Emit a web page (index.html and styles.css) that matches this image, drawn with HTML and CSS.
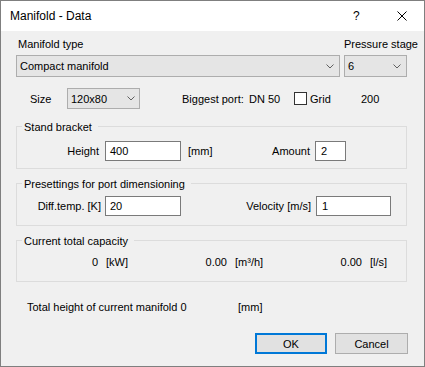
FILE: index.html
```html
<!DOCTYPE html>
<html>
<head>
<meta charset="utf-8">
<link rel="stylesheet" href="styles.css">
</head>
<body>
<div class="window">
  <div class="titlebar">
    <span class="title">Manifold - Data</span>
    <span class="help">?</span>
    <svg class="close" width="10" height="10" viewBox="0 0 10 10"><path d="M0.5 0.5 L9.5 9.5 M9.5 0.5 L0.5 9.5" stroke="#000" stroke-width="1"/></svg>
  </div>
  <div class="content">
    <div class="row labels">
      <span class="lbl-type">Manifold type</span>
      <span class="lbl-stage">Pressure stage</span>
    </div>
    <div class="row combos">
      <div class="combo c-type"><span>Compact manifold</span><svg class="chev" width="8" height="5" viewBox="0 0 8 5"><path d="M0.5 0.5 L4 4 L7.5 0.5" fill="none" stroke="#606060"/></svg></div>
      <div class="combo c-stage"><span>6</span><svg class="chev" width="8" height="5" viewBox="0 0 8 5"><path d="M0.5 0.5 L4 4 L7.5 0.5" fill="none" stroke="#606060"/></svg></div>
    </div>
    <div class="row size-row">
      <span class="lbl-size">Size</span>
      <div class="combo c-size"><span>120x80</span><svg class="chev" width="8" height="5" viewBox="0 0 8 5"><path d="M0.5 0.5 L4 4 L7.5 0.5" fill="none" stroke="#606060"/></svg></div>
      <span class="lbl-port">Biggest port:</span>
      <span class="val-port">DN 50</span>
      <span class="checkbox"></span>
      <span class="lbl-grid">Grid</span>
      <span class="val-grid">200</span>
    </div>

    <div class="group g1">
      <div class="legend">Stand bracket</div>
      <div class="grow">
        <span class="cell-a">Height</span>
        <div class="input w-a">400</div>
        <span class="cell-b1"><span>[mm]</span><span>Amount</span></span>
        <div class="input w-amount">2</div>
      </div>
    </div>

    <div class="group g2">
      <div class="legend">Presettings for port dimensioning</div>
      <div class="grow">
        <span class="cell-a2">Diff.temp. [K]</span>
        <div class="input w-a">20</div>
        <span class="cell-b2">Velocity [m/s]</span>
        <div class="input w-vel">1</div>
      </div>
    </div>

    <div class="group g3">
      <div class="legend">Current total capacity</div>
      <div class="grow">
        <span class="v v1">0</span><span class="u u1">[kW]</span>
        <span class="v v2">0.00</span><span class="u u2">[m³/h]</span>
        <span class="v v3">0.00</span><span class="u u3">[l/s]</span>
      </div>
    </div>

    <div class="row total-row">
      <span class="lbl-total">Total height of current manifold 0</span>
      <span>[mm]</span>
    </div>

    <div class="row buttons">
      <div class="btn btn-ok">OK</div>
      <div class="btn btn-cancel">Cancel</div>
    </div>
  </div>
</div>
</body>
</html>
```

FILE: styles.css
```css
* { box-sizing: border-box; }
html, body { margin: 0; padding: 0; background: #f0f0f0; }
body {
  font-family: "Liberation Sans", Arial, sans-serif;
  font-size: 11px;
  color: #000;
}
.window {
  width: 425px;
  height: 367px;
  border: 1px solid #7f7f7f;
  background: #f0f0f0;
  display: flex;
  flex-direction: column;
  overflow: hidden;
}
.titlebar {
  height: 30px;
  background: #fff;
  display: flex;
  align-items: center;
  flex-shrink: 0;
}
.title {
  font-size: 12px;
  margin-left: 9px;
  flex: 1;
}
.help {
  font-size: 12px;
  width: 44px;
}
.close {
  margin-right: 17px;
}
.content {
  padding: 0 16px 0 15px;
  display: flex;
  flex-direction: column;
}
.row {
  display: flex;
  align-items: center;
  flex-shrink: 0;
}
.row > * { flex-shrink: 0; }
.labels {
  height: 16px;
  margin-top: 5px;
}
.lbl-type { width: 328px; padding-left: 2px; }
.lbl-stage { white-space: nowrap; }

.combos {
  height: 22px;
  margin-top: 3px;
  gap: 4px;
}
.combo {
  height: 100%;
  background: #e5e5e5;
  border: 1px solid #adadad;
  display: flex;
  align-items: center;
  justify-content: space-between;
  padding: 0 5px 0 3px;
}
.c-type { width: 324px; }
.c-stage { width: 63px; }
.chev { flex-shrink: 0; }

.size-row {
  height: 21px;
  margin-top: 11px;
}
.lbl-size { width: 37px; margin-left: 14px; }
.c-size { width: 73px; padding-right: 4px; }
.lbl-port { width: 67px; margin-left: 42px; }
.val-port { width: 45px; }
.checkbox {
  width: 13px;
  height: 13px;
  border: 1px solid #333;
  background: #fff;
  margin-right: 3px;
}
.lbl-grid { width: 51px; }

.group {
  border: 1px solid #dcdcdc;
  width: 391px;
  flex-shrink: 0;
}
.legend {
  height: 16px;
  line-height: 16px;
  margin-top: -8px;
  margin-left: 5px;
  padding: 0 6px 0 2px;
  background: #f0f0f0;
  width: fit-content;
}
.grow {
  display: flex;
  align-items: center;
}
.grow > * { flex-shrink: 0; }
.g1 { height: 43px; margin-top: 17px; }
.g1 .grow { margin-top: 6px; }
.g2 { height: 43px; margin-top: 14px; }
.g2 .grow { margin-top: 4px; }
.g3 { height: 42px; margin-top: 14px; }
.g3 .grow { margin-top: 5px; height: 16px; }

.input {
  height: 20px;
  background: #fff;
  border: 1px solid #7a7a7a;
  display: flex;
  align-items: center;
  padding-left: 4px;
}
.cell-a { width: 82px; text-align: right; margin-right: 6px; }
.w-a { width: 76px; }
.cell-b1 {
  width: 129px;
  display: flex;
  justify-content: space-between;
  padding-left: 7px;
  margin-right: 5px;
}
.w-amount { width: 31px; padding-left: 5px; }
.cell-a2 { width: 84px; text-align: right; margin-right: 4px; }
.cell-b2 { width: 130px; text-align: right; margin-right: 5px; }
.w-vel { width: 75px; padding-left: 5px; }

.v { text-align: right; }
.v1 { width: 81px; }
.u { padding-left: 8px; }
.u1 { width: 62px; }
.v2 { width: 67px; }
.u2 { width: 73px; }
.v3 { width: 62px; }

.total-row {
  height: 16px;
  margin-top: 17px;
}
.lbl-total { width: 211px; margin-left: 11px; white-space: nowrap; }

.buttons {
  height: 21px;
  margin-top: 18px;
  justify-content: flex-end;
  gap: 8px;
}
.btn {
  height: 21px;
  background: #e1e1e1;
  border: 1px solid #adadad;
  display: flex;
  align-items: center;
  justify-content: center;
}
.btn-ok { width: 72px; border: 2px solid #0078d7; }
.btn-cancel { width: 73px; }
```
